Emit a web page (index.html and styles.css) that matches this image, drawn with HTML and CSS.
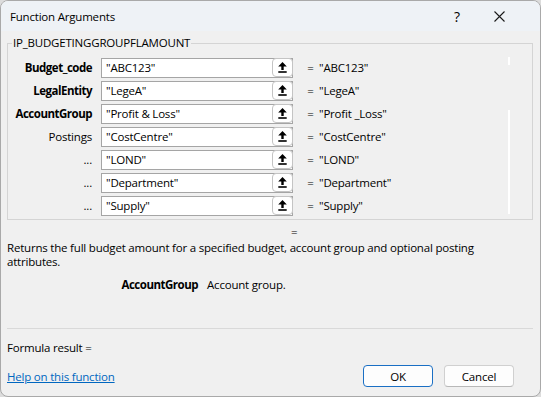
FILE: index.html
```html
<!DOCTYPE html>
<html lang="en">
<head>
    <meta charset="UTF-8">
    <title>Function Arguments</title>
    <link rel="stylesheet" href="styles.css">
</head>
<body>
    <div class="dialog">
        <div class="titlebar">
            <span class="title">Function Arguments</span>
            <span class="help-btn">?</span>
            <span class="close-btn">
                <svg width="11" height="11" viewBox="0 0 11 11"><path d="M0.5 0.5 L10.5 10.5 M10.5 0.5 L0.5 10.5" stroke="#1a1a1a" stroke-width="1.1" fill="none"/></svg>
            </span>
        </div>

        <fieldset class="group">
            <legend>IP_BUDGETINGGROUPFLAMOUNT</legend>
            <div class="args">
                <div class="arg">
                    <span class="name req">Budget_code</span>
                    <div class="field"><span class="val">"ABC123"</span><span class="pick"><svg width="9" height="11" viewBox="0 0 9 11"><path d="M4.5 0 L8.8 4.6 H5.7 V8 H3.3 V4.6 H0.2 Z"/><rect x="0.3" y="9.2" width="8.4" height="1.6"/></svg></span></div>
                    <span class="eq">=</span>
                    <span class="res">"ABC123"</span>
                </div>
                <div class="arg">
                    <span class="name req">LegalEntity</span>
                    <div class="field"><span class="val">"LegeA"</span><span class="pick"><svg width="9" height="11" viewBox="0 0 9 11"><path d="M4.5 0 L8.8 4.6 H5.7 V8 H3.3 V4.6 H0.2 Z"/><rect x="0.3" y="9.2" width="8.4" height="1.6"/></svg></span></div>
                    <span class="eq">=</span>
                    <span class="res">"LegeA"</span>
                </div>
                <div class="arg">
                    <span class="name req">AccountGroup</span>
                    <div class="field"><span class="val">"Profit &amp; Loss"</span><span class="pick"><svg width="9" height="11" viewBox="0 0 9 11"><path d="M4.5 0 L8.8 4.6 H5.7 V8 H3.3 V4.6 H0.2 Z"/><rect x="0.3" y="9.2" width="8.4" height="1.6"/></svg></span></div>
                    <span class="eq">=</span>
                    <span class="res">"Profit _Loss"</span>
                </div>
                <div class="arg">
                    <span class="name">Postings</span>
                    <div class="field"><span class="val">"CostCentre"</span><span class="pick"><svg width="9" height="11" viewBox="0 0 9 11"><path d="M4.5 0 L8.8 4.6 H5.7 V8 H3.3 V4.6 H0.2 Z"/><rect x="0.3" y="9.2" width="8.4" height="1.6"/></svg></span></div>
                    <span class="eq">=</span>
                    <span class="res">"CostCentre"</span>
                </div>
                <div class="arg">
                    <span class="name">...</span>
                    <div class="field"><span class="val">"LOND"</span><span class="pick"><svg width="9" height="11" viewBox="0 0 9 11"><path d="M4.5 0 L8.8 4.6 H5.7 V8 H3.3 V4.6 H0.2 Z"/><rect x="0.3" y="9.2" width="8.4" height="1.6"/></svg></span></div>
                    <span class="eq">=</span>
                    <span class="res">"LOND"</span>
                </div>
                <div class="arg">
                    <span class="name">...</span>
                    <div class="field"><span class="val">"Department"</span><span class="pick"><svg width="9" height="11" viewBox="0 0 9 11"><path d="M4.5 0 L8.8 4.6 H5.7 V8 H3.3 V4.6 H0.2 Z"/><rect x="0.3" y="9.2" width="8.4" height="1.6"/></svg></span></div>
                    <span class="eq">=</span>
                    <span class="res">"Department"</span>
                </div>
                <div class="arg">
                    <span class="name">...</span>
                    <div class="field"><span class="val">"Supply"</span><span class="pick"><svg width="9" height="11" viewBox="0 0 9 11"><path d="M4.5 0 L8.8 4.6 H5.7 V8 H3.3 V4.6 H0.2 Z"/><rect x="0.3" y="9.2" width="8.4" height="1.6"/></svg></span></div>
                    <span class="eq">=</span>
                    <span class="res">"Supply"</span>
                </div>
                <!-- leftover scrollbar track -->
                <i class="track t1"></i>
                <i class="track t2"></i>
            </div>
        </fieldset>

        <div class="total-eq">=</div>
        <p class="desc">Returns the full budget amount for a specified budget, account group and optional posting attributes.</p>
        <div class="arg-help">
            <span class="arg-help-name">AccountGroup</span>
            <span>Account group.</span>
        </div>

        <div class="spacer"></div>

        <div class="footer">
            <div class="sep"></div>
            <div class="formula">Formula result =</div>
            <div class="actions">
                <a class="help-link" href="#">Help on this function</a>
                <button class="btn ok">OK</button>
                <button class="btn">Cancel</button>
            </div>
        </div>
    </div>
</body>
</html>
```

FILE: styles.css
```css
*{
    margin: 0;
    padding: 0;
    box-sizing: border-box;
}
html{
    background: #dcdcdc;
}
body{
    font-family: "Segoe UI", "Open Sans", "Noto Sans", sans-serif;
    font-size: 11.5px;
    letter-spacing: -0.2px;
    color: #000;
}
.dialog{
    width: 541px;
    height: 397px;
    background: #f0f0f0;
    border: 1px solid #a9a9a9;
    border-radius: 8px;
    overflow: hidden;
    display: flex;
    flex-direction: column;
}
.titlebar{
    height: 30px;
    flex-shrink: 0;
    display: flex;
    align-items: center;
    background: #eef2f6;
    padding-left: 9px;
}
.title{
    font-size: 11.5px;
}
.help-btn{
    margin-left: auto;
    width: 44px;
    text-align: center;
    font-size: 14px;
}
.close-btn{
    width: 40px;
    margin-right: 21px;
    display: flex;
    justify-content: center;
}
.group{
    margin: 4px 7px 0 6px;
    border: 1px solid #d4d4d4;
    padding: 5px 0 2px 0;
}
.group legend{
    margin-left: 4px;
    padding: 0 1px;
    line-height: 16px;
}
.args{
    position: relative;
}
.arg{
    display: flex;
    align-items: center;
    height: 23px;
}
.name{
    width: 84px;
    margin-right: 9px;
    text-align: right;
}
.name.req{
    font-weight: bold;
    letter-spacing: -0.5px;
}
.field{
    width: 192px;
    height: 20px;
    display: flex;
    align-items: center;
    background: #fff;
    border: 1px solid #a5a5a5;
}
.val{
    flex: 1;
    padding-left: 4px;
}
.pick{
    width: 21px;
    height: 19px;
    margin-right: -1px;
    display: flex;
    align-items: center;
    justify-content: center;
    background: #fff;
    border: 1px solid #c4c4c4;
    border-radius: 4px;
}
.pick svg{
    fill: #000;
}
.eq{
    width: 19px;
    margin-left: 8px;
    text-align: center;
}
.res{
    margin-left: -1px;
}
.track{
    position: absolute;
    left: 500px;
    width: 2px;
    background: #fff;
}
.t1{
    top: 1px;
    height: 8px;
}
.t2{
    top: 54px;
    height: 104px;
}
.total-eq{
    margin-top: 5px;
    padding-left: 290px;
    line-height: 14px;
}
.desc{
    margin: 2px 0 0 6px;
    width: 480px;
    line-height: 14px;
}
.arg-help{
    margin-top: 9px;
    display: flex;
    line-height: 14px;
}
.arg-help-name{
    width: 197px;
    margin-right: 9px;
    text-align: right;
    font-weight: bold;
    letter-spacing: -0.5px;
}
.spacer{
    flex: 1;
}
.footer{
    padding: 0 7px 9px 6px;
}
.sep{
    border-top: 1px solid #d9d9d9;
}
.formula{
    margin-top: 12px;
    line-height: 14px;
}
.actions{
    margin-top: 10px;
    display: flex;
    align-items: center;
    padding-right: 19px;
}
.help-link{
    color: #0067c0;
    text-decoration: underline;
    margin-right: auto;
}
.btn{
    width: 70px;
    height: 22px;
    font-family: inherit;
    font-size: 11.5px;
    letter-spacing: -0.2px;
    background: #fdfdfd;
    border: 1px solid #d0d0d0;
    border-bottom-color: #b8b8b8;
    border-radius: 4px;
    margin-left: 11px;
}
.btn.ok{
    border: 1px solid #1a6fc4;
}
```
